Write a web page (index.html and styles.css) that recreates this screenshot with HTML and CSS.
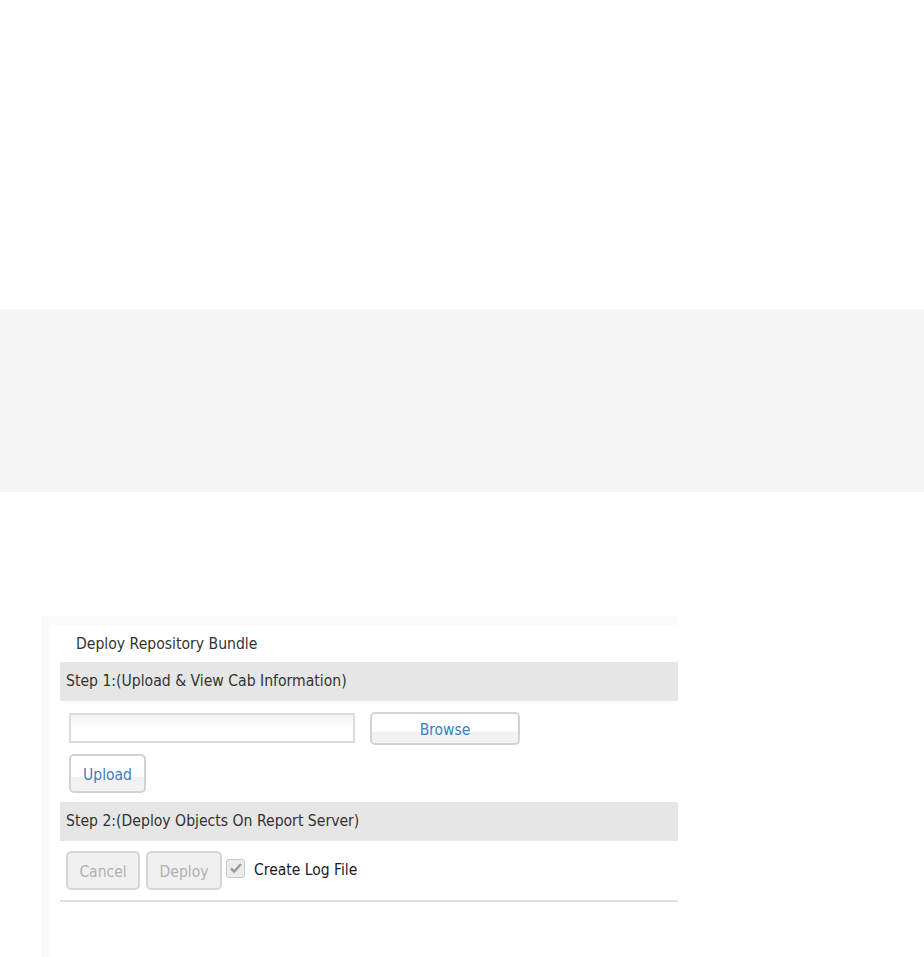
FILE: index.html
```html
<!DOCTYPE html>
<html lang="en">
<head>
    <meta charset="UTF-8">
    <meta name="viewport" content="width=device-width, initial-scale=1.0">
    <title>Deploy Repository Bundle</title>
    <link rel="stylesheet" href="styles.css">
</head>
<body>
    <div class="top-space"></div>
    <div class="band"></div>

    <div class="panel">
        <div class="panel-inner">
            <h1 class="panel-title">Deploy Repository Bundle</h1>

            <div class="step-bar">Step 1:(Upload &amp; View Cab Information)</div>
            <div class="file-row">
                <input type="text" class="file-input">
                <button class="btn btn-browse">Browse</button>
            </div>
            <div class="upload-row">
                <button class="btn btn-upload">Upload</button>
            </div>

            <div class="step-bar">Step 2:(Deploy Objects On Report Server)</div>
            <div class="action-row">
                <button class="btn btn-disabled btn-cancel" disabled>Cancel</button>
                <button class="btn btn-disabled btn-deploy" disabled>Deploy</button>
                <label class="log-option">
                    <span class="check-box">
                        <svg width="14" height="12" viewBox="0 0 14 12"><path d="M2 6.5 L5.2 9.5 L12 2" fill="none" stroke="#9a9a9a" stroke-width="2.4"/></svg>
                    </span>
                    <span class="log-label">Create Log File</span>
                </label>
            </div>
            <div class="divider"></div>
        </div>
    </div>
</body>
</html>
```

FILE: styles.css
```css
/* Reset */
* {
    margin: 0;
    padding: 0;
    box-sizing: border-box;
}

body {
    font-family: "DejaVu Sans Condensed", "Liberation Sans", sans-serif;
    background-color: #fff;
    color: #333;
    font-size: 15px;
}

/* Page bands */
.top-space {
    height: 309px;
}

.band {
    height: 183px;
    background-color: #f5f5f5;
}

/* Deploy panel */
.panel {
    margin: 124px 0 0 41px;
    width: 637px;
    height: 341px;
    background-color: #fafafa;
    padding: 9px 0 0 9px;
}

.panel-inner {
    background-color: #fff;
    height: 100%;
    padding-left: 10px;
}

.panel-title {
    font-size: 15.6px;
    font-weight: normal;
    color: #333;
    height: 37px;
    line-height: 38px;
    padding-left: 16px;
}

.step-bar {
    height: 39px;
    line-height: 39px;
    background-color: #e6e6e6;
    padding-left: 6px;
    font-size: 15.6px;
    color: #333;
}

/* Buttons */
.btn {
    font-family: inherit;
    font-size: 15.5px;
    color: #3d7cc0;
    background: linear-gradient(#fff 0%, #fff 60%, #f1f1f1 61%, #f3f3f3 100%);
    border: 1px solid #d2d2d2;
    border-radius: 5px;
    cursor: pointer;
}

.btn-disabled {
    color: #b0b0b0;
    background: #f0f0f0;
    border-color: #d6d6d6;
    cursor: default;
}

/* Step 1 */
.file-row {
    display: flex;
    align-items: flex-start;
    margin-top: 11px;
}

.file-input {
    margin: 1px 0 0 9px;
    width: 286px;
    height: 30px;
    border: 2px solid #dcdcdc;
    background: linear-gradient(#f0f5fb, #fff 60%);
}

.btn-browse {
    margin-left: 15px;
    width: 150px;
    height: 33px;
    border-width: 2px;
    padding-top: 2px;
}

.upload-row {
    margin: 9px 0 9px 9px;
}

.btn-upload {
    width: 77px;
    height: 39px;
    border-width: 2px;
    padding-top: 2px;
}

/* Step 2 */
.action-row {
    display: flex;
    align-items: flex-start;
    gap: 6px;
    margin: 10px 0 0 6px;
}

.btn-cancel {
    width: 74px;
    height: 39px;
    border-width: 2px;
    padding-top: 3px;
}

.btn-deploy {
    width: 76px;
    height: 39px;
    border-width: 2px;
    padding-top: 3px;
}

.log-option {
    display: flex;
    align-items: center;
    margin: 6px 0 0 -2px;
    gap: 9px;
}

.check-box {
    width: 19px;
    height: 19px;
    border: 1px solid #c8c8c8;
    border-radius: 3px;
    background: #ececec;
    display: flex;
    align-items: center;
    justify-content: center;
}

.log-label {
    font-size: 15.5px;
    color: #1a1a2a;
    margin-top: 4px;
}

.divider {
    margin-top: 10px;
    height: 2px;
    background-color: #e0e0da;
}
```
